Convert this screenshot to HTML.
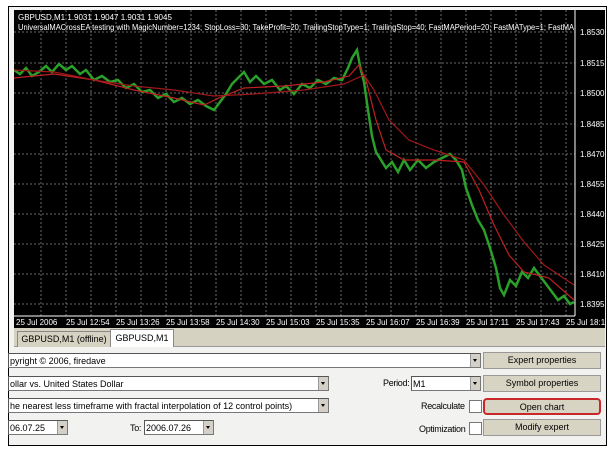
<!DOCTYPE html>
<html><head><style>
body{margin:0;width:615px;height:450px;background:#fff;position:relative;overflow:hidden;font-family:"Liberation Sans",sans-serif;font-size:9px}
.a{position:absolute}
.frame{left:8px;top:6px;width:597px;height:438px;border:1px solid #000;background:#f2f2f0}
.inp{position:absolute;background:#fff;border:1px solid #777;border-top-color:#555;border-left-color:#555;height:15px;line-height:15px;font-size:9px;white-space:nowrap;overflow:hidden;box-sizing:border-box;padding-left:1px}
.dd{position:absolute;right:0;top:0;width:9px;height:13px;background:#d4d0c8;border-left:1px solid #999}
.dd:after{content:"";position:absolute;left:2px;top:5px;border:2px solid transparent;border-top:3px solid #000}
.btn{position:absolute;left:483px;width:118px;height:17px;background:#d8d4c4;border:1px solid #999;box-sizing:border-box;text-align:center;line-height:15px;font-size:9px}
.cb{position:absolute;left:469px;width:11px;height:11px;background:#fff;border:1px solid #777}
.lbl{position:absolute;font-size:9px;letter-spacing:-0.3px}
</style></head><body>
<div class="a frame"></div>
<div class="a" style="left:14px;top:10px;width:591px;height:318px;background:#000"></div>
<svg class="a" style="left:14px;top:10px" width="591" height="318">
<g stroke="#888" stroke-dasharray="2,2" stroke-width="0.8">
<line x1="0" y1="22" x2="561" y2="22"/><line x1="0" y1="53" x2="561" y2="53"/><line x1="0" y1="83" x2="561" y2="83"/><line x1="0" y1="114" x2="561" y2="114"/><line x1="0" y1="144" x2="561" y2="144"/><line x1="0" y1="174" x2="561" y2="174"/><line x1="0" y1="204" x2="561" y2="204"/><line x1="0" y1="234" x2="561" y2="234"/><line x1="0" y1="264" x2="561" y2="264"/><line x1="0" y1="294" x2="561" y2="294"/>
<line x1="27" y1="0" x2="27" y2="306"/><line x1="52" y1="0" x2="52" y2="306"/><line x1="77" y1="0" x2="77" y2="306"/><line x1="102" y1="0" x2="102" y2="306"/><line x1="127" y1="0" x2="127" y2="306"/><line x1="152" y1="0" x2="152" y2="306"/><line x1="177" y1="0" x2="177" y2="306"/><line x1="202" y1="0" x2="202" y2="306"/><line x1="227" y1="0" x2="227" y2="306"/><line x1="252" y1="0" x2="252" y2="306"/><line x1="277" y1="0" x2="277" y2="306"/><line x1="302" y1="0" x2="302" y2="306"/><line x1="327" y1="0" x2="327" y2="306"/><line x1="352" y1="0" x2="352" y2="306"/><line x1="377" y1="0" x2="377" y2="306"/><line x1="402" y1="0" x2="402" y2="306"/><line x1="427" y1="0" x2="427" y2="306"/><line x1="452" y1="0" x2="452" y2="306"/><line x1="477" y1="0" x2="477" y2="306"/><line x1="502" y1="0" x2="502" y2="306"/><line x1="527" y1="0" x2="527" y2="306"/><line x1="552" y1="0" x2="552" y2="306"/>
</g>
<line x1="561" y1="0" x2="561" y2="306" stroke="#fff"/>
<line x1="0" y1="306" x2="561" y2="306" stroke="#fff"/>
<polyline fill="none" stroke="#2aa02a" stroke-width="2.5" points="0,60 6,64 12,58 18,66 25,62 32,56 38,62 45,54 52,60 58,56 66,64 72,60 80,70 88,66 96,72 104,70 112,78 120,74 128,82 136,80 144,88 152,84 160,92 168,88 176,94 184,90 192,96 200,100 206,92 212,84 218,74 224,68 230,62 236,72 242,66 250,74 258,70 266,80 272,76 280,84 288,74 296,78 304,70 312,74 320,68 328,70 334,58 338,48 343,40 346,56 350,72 354,100 358,126 362,142 367,150 372,158 378,152 384,162 390,150 396,160 404,150 412,158 420,152 428,148 436,144 442,150 448,160 452,178 458,195 464,210 470,220 476,238 482,258 486,278 490,285 496,270 502,276 508,262 514,268 520,258 526,266 532,274 538,282 544,290 550,286 556,294 560,292"/>
<polyline fill="none" stroke="#c02020" stroke-width="1.2" points="0,68 40,64 80,70 120,80 160,88 190,95 205,88 230,78 270,76 310,72 335,66 345,55 352,70 362,110 372,140 390,150 420,150 450,152 465,180 480,215 495,245 510,262 535,268 560,290"/>
<polyline fill="none" stroke="#a01818" stroke-width="1.2" points="0,60 40,62 80,70 120,76 160,80 200,86 240,84 290,80 330,74 350,65 360,80 375,110 395,130 420,140 450,150 470,175 490,205 510,232 530,255 560,275"/>
<g fill="#fff" font-size="8">
<text x="566" y="25">1.8530</text><text x="566" y="56">1.8515</text><text x="566" y="86">1.8500</text><text x="566" y="117">1.8485</text><text x="566" y="147">1.8470</text><text x="566" y="177">1.8455</text><text x="566" y="207">1.8440</text><text x="566" y="237">1.8425</text><text x="566" y="267">1.8410</text><text x="566" y="297">1.8395</text>
<text x="2" y="315">25 Jul 2006</text><text x="52" y="315">25 Jul 12:54</text><text x="102" y="315">25 Jul 13:26</text><text x="152" y="315">25 Jul 13:58</text><text x="202" y="315">25 Jul 14:30</text><text x="252" y="315">25 Jul 15:03</text><text x="302" y="315">25 Jul 15:35</text><text x="352" y="315">25 Jul 16:07</text><text x="402" y="315">25 Jul 16:39</text><text x="452" y="315">25 Jul 17:11</text><text x="502" y="315">25 Jul 17:43</text><text x="552" y="315">25 Jul 18:1</text>
<text x="4" y="10">GBPUSD,M1  1.9031 1.9047 1.9031 1.9045</text>
<text x="4" y="20" textLength="556" lengthAdjust="spacingAndGlyphs">UniversalMACrossEA testing with MagicNumber=1234; StopLoss=30; TakeProfit=20; TrailingStopType=1; TrailingStop=40; FastMAPeriod=20; FastMAType=1; FastMA</text>
</g>
</svg>
<div class="a" style="left:14px;top:328px;width:591px;height:18px;background:#d6d2c2;border-bottom:1px solid #999"></div>
<div class="a" style="left:17px;top:331px;width:92px;height:15px;background:#d6d2c2;border:1px solid #888;border-bottom:none;text-align:center;line-height:15px">GBPUSD,M1 (offline)</div>
<div class="a" style="left:110px;top:329px;width:62px;height:17px;background:#fff;border:1px solid #888;border-bottom:none;text-align:center;line-height:17px">GBPUSD,M1</div>
<div class="inp" style="left:8px;top:353px;width:473px">pyright © 2006, firedave<div class="dd"></div></div>
<div class="btn" style="top:352px">Expert properties</div>
<div class="inp" style="left:8px;top:376px;width:321px">ollar vs. United States Dollar<div class="dd"></div></div>
<div class="lbl" style="left:383px;top:378px">Period:</div>
<div class="inp" style="left:411px;top:376px;width:70px">M1<div class="dd"></div></div>
<div class="btn" style="top:375px">Symbol properties</div>
<div class="inp" style="left:8px;top:398px;width:321px">he nearest less timeframe with fractal interpolation of 12 control points)<div class="dd"></div></div>
<div class="lbl" style="left:421px;top:401px">Recalculate</div>
<div class="cb" style="top:400px"></div>
<div class="btn" style="top:398px;border:2px solid #c8282a;border-radius:4px;line-height:14px">Open chart</div>
<div class="inp" style="left:8px;top:420px;width:60px">06.07.25<div class="dd"></div></div>
<div class="lbl" style="left:130px;top:423px">To:</div>
<div class="inp" style="left:144px;top:420px;width:70px">2006.07.26<div class="dd"></div></div>
<div class="lbl" style="left:419px;top:424px">Optimization</div>
<div class="cb" style="top:422px"></div>
<div class="btn" style="top:419px">Modify expert</div>
</body></html>
